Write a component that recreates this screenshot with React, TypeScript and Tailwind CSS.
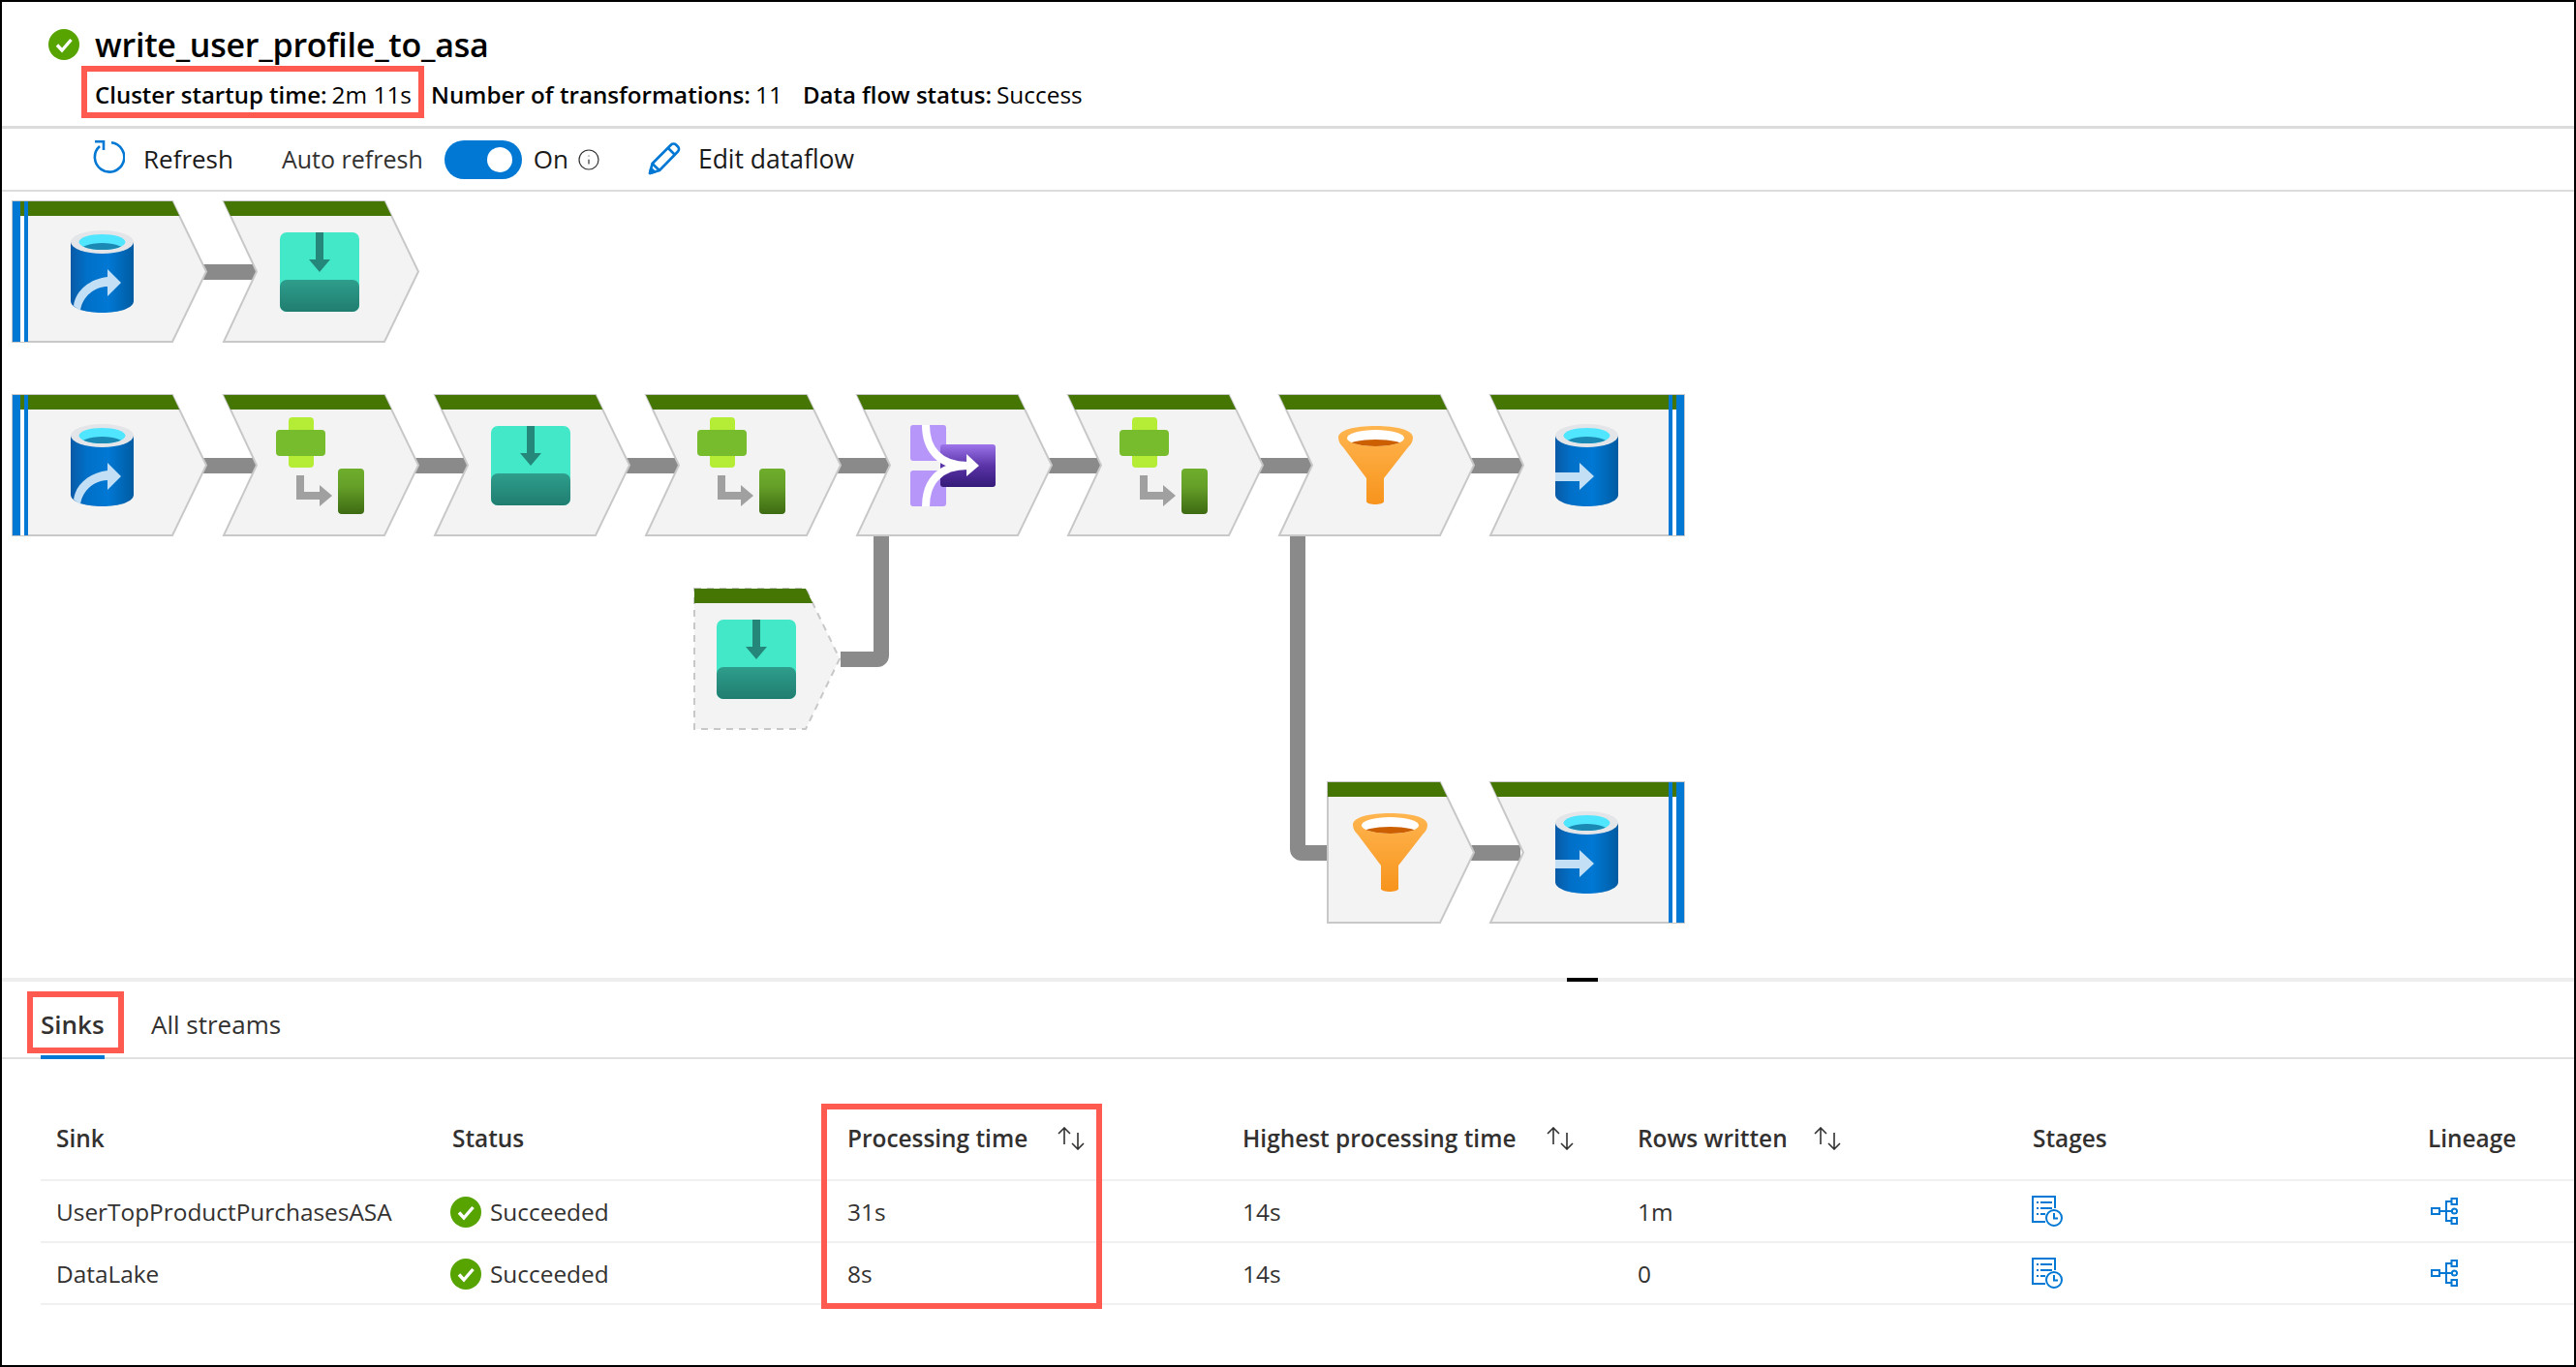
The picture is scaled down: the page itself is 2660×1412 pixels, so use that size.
import React from "react";
import { Info } from "lucide-react";

const FONT = "font-['Open_Sans','Noto_Sans',sans-serif]";

function CheckCircle({ className }: { className: string }) {
  return (
    <svg viewBox="0 0 32 32" className={className}>
      <circle cx="16" cy="16" r="16" fill="#57a300" />
      <path d="M9 16.5l5 5.5 9.5-11" fill="none" stroke="#fff" strokeWidth="3.4" />
    </svg>
  );
}

function SortIcon({ className }: { className: string }) {
  return (
    <svg viewBox="0 0 30 24" className={className} fill="none" stroke="#323130" strokeWidth="1.6">
      <path d="M8 18V1M2 7l6-6 6 6" />
      <path d="M22 6v17M16 17l6 6 6-6" />
    </svg>
  );
}

function StagesIcon() {
  return (
    <svg viewBox="0 0 32 32" className="w-8 h-8" fill="none" stroke="#0078d4" strokeWidth="2">
      <path d="M14 27H1V1h23v12" />
      <path d="M5 7h2M9 7h12M5 13h2M9 13h12M5 19h2M9 19h5" />
      <circle cx="23" cy="23" r="8" />
      <path d="M23 18v5.5h4" />
    </svg>
  );
}

function LineageIcon() {
  return (
    <svg viewBox="0 0 28 28" className="w-7 h-7 ml-[3px]" fill="none" stroke="#0078d4" strokeWidth="2">
      <rect x="1" y="11" width="8" height="6" />
      <rect x="21.5" y="1" width="5.5" height="6" />
      <circle cx="24.5" cy="14" r="2.6" />
      <rect x="21.5" y="21" width="5.5" height="6" />
      <path d="M9 14h13M16 14V4h5.5M16 14v10h5.5" />
    </svg>
  );
}

function RedBox({ className }: { className: string }) {
  return <div className={`absolute border-[6px] border-[#ff5a50] pointer-events-none ${className}`} />;
}

const NODE_H = 145;
const BAR_H = 15;

function Node({
  x,
  y,
  left,
  right,
  w,
  dashed,
  source,
  sink,
}: {
  x: number;
  y: number;
  left: "notch" | "flat";
  right: "point" | "flat";
  w: number;
  dashed?: boolean;
  source?: boolean;
  sink?: boolean;
}) {
  const topRight = right === "point" ? w - 35 : w;
  const d =
    `M0 0 L${topRight} 0 ` +
    (right === "point" ? `L${w} ${NODE_H / 2} L${topRight} ${NODE_H} ` : `L${w} ${NODE_H} `) +
    `L0 ${NODE_H} ` +
    (left === "notch" ? `L34 ${NODE_H / 2} ` : "") +
    "Z";
  const slope = 35 / (NODE_H / 2);
  const barRight = right === "point" ? topRight + BAR_H * slope : w;
  const barLeft = left === "notch" ? BAR_H * (34 / (NODE_H / 2)) : 0;
  return (
    <g transform={`translate(${x} ${y})`}>
      <path d={d} fill="#f3f3f3" stroke="#c8c8c8" strokeWidth="2" strokeDasharray={dashed ? "7 6" : undefined} />
      <path d={`M0 0 L${topRight} 0 L${barRight} ${BAR_H} L${barLeft} ${BAR_H} Z`} fill="#457503" />
      {source && (
        <>
          <rect x="0" y="0" width="8" height={NODE_H} fill="#0078d4" />
          <rect x="8" y={BAR_H} width="4" height={NODE_H - BAR_H} fill="#fff" />
          <rect x="12" y="0" width="4" height={NODE_H} fill="#0078d4" />
        </>
      )}
      {sink && (
        <>
          <rect x={w - 16} y="0" width="4" height={NODE_H} fill="#0078d4" />
          <rect x={w - 12} y={BAR_H} width="4" height={NODE_H - BAR_H} fill="#fff" />
          <rect x={w - 8} y="0" width="8" height={NODE_H} fill="#0078d4" />
        </>
      )}
    </g>
  );
}

function Defs() {
  return (
    <defs>
      <linearGradient id="dbBody" x1="0" x2="1" y1="0" y2="0">
        <stop offset="0" stopColor="#0a5aa6" />
        <stop offset="0.25" stopColor="#0070c8" />
        <stop offset="0.6" stopColor="#0078d4" />
        <stop offset="1" stopColor="#005ba1" />
      </linearGradient>
      <linearGradient id="tealBottom" x1="0" x2="0" y1="0" y2="1">
        <stop offset="0" stopColor="#2f9e8c" />
        <stop offset="1" stopColor="#207d70" />
      </linearGradient>
      <linearGradient id="greenRect" x1="0" x2="0" y1="0" y2="1">
        <stop offset="0" stopColor="#6fae2c" />
        <stop offset="0.4" stopColor="#659f28" />
        <stop offset="1" stopColor="#3d6a12" />
      </linearGradient>
      <linearGradient id="purpleRect" x1="0" x2="0" y1="0" y2="1">
        <stop offset="0" stopColor="#9d74ea" />
        <stop offset="0.5" stopColor="#5b34a8" />
        <stop offset="1" stopColor="#341a78" />
      </linearGradient>
      <linearGradient id="funnelFill" x1="0" x2="0" y1="0" y2="1">
        <stop offset="0" stopColor="#ffb54f" />
        <stop offset="1" stopColor="#f7941d" />
      </linearGradient>
      <clipPath id="dbInner">
        <ellipse cx="32.5" cy="12" rx="24" ry="8" />
      </clipPath>
      <clipPath id="funnelInner">
        <ellipse cx="38.5" cy="12.5" rx="29.5" ry="8.5" />
      </clipPath>
      <g id="dbBase">
        <path d="M0 12V73C0 80 14 85 32.5 85S65 80 65 73V12Z" fill="url(#dbBody)" />
        <ellipse cx="32.5" cy="12" rx="32.5" ry="12" fill="#e3e5e8" />
        <ellipse cx="32.5" cy="12" rx="24" ry="8" fill="#50e6ff" />
        <ellipse cx="32.5" cy="22" rx="24" ry="9" fill="#1a8ab5" clipPath="url(#dbInner)" />
      </g>
      <g id="dbSource">
        <use href="#dbBase" />
        <path d="M3 78C5 62 20 50 38 48V40L52 54 38 68V58C25 58 12 68 10 83Z" fill="#c3dff5" />
      </g>
      <g id="dbSink">
        <use href="#dbBase" />
        <path d="M0 50H25V40L40 54 25 68V59H0Z" fill="#c3dff5" />
      </g>
      <g id="teal">
        <rect x="0" y="0" width="82" height="82" rx="7" fill="#43e8c9" />
        <path d="M37 0h8v28h7L41 41 30 28h7Z" fill="#25877a" />
        <path d="M0 56a7 7 0 0 1 7-7h68a7 7 0 0 1 7 7v19a7 7 0 0 1-7 7H7a7 7 0 0 1-7-7Z" fill="url(#tealBottom)" />
      </g>
      <g id="derive">
        <rect x="67" y="23" width="26" height="52" rx="4" fill="#b4ec36" />
        <rect x="54" y="36" width="51" height="27" rx="4" fill="#76bc2d" />
        <path d="M75 83h8v17h16v-7l13 11-13 11v-7H75Z" fill="#a0a0a0" />
        <rect x="118" y="76" width="27" height="47" rx="4" fill="url(#greenRect)" />
      </g>
      <g id="join">
        <rect x="55" y="31" width="37" height="37" rx="3" fill="#b796f9" />
        <rect x="55" y="78" width="37" height="37" rx="3" fill="#b796f9" />
        <rect x="86" y="51" width="57" height="44" rx="3" fill="url(#purpleRect)" />
        <path d="M71 31C71 56 85 73 114 73M71 115C71 90 85 73 114 73" fill="none" stroke="#fff" strokeWidth="8" />
        <path d="M113 61L126 73 113 84Z" fill="#fff" />
      </g>
      <g id="funnel">
        <path d="M0 12C0 4 17 0 38.5 0S77 4 77 12C77 16 75 19 72 22L47 54V78C47 80 42 81 38 81S29 80 29 78V54L5 22C2 19 0 16 0 12Z" fill="url(#funnelFill)" />
        <ellipse cx="38.5" cy="12.5" rx="29.5" ry="8.5" fill="#fff" />
        <ellipse cx="38.5" cy="21" rx="29.5" ry="7" fill="#cc5f00" clipPath="url(#funnelInner)" />
      </g>
    </defs>
  );
}

function Diagram() {
  const row2Mid = [231, 449, 667, 885, 1103, 1321];
  return (
    <svg viewBox="2 198 2656 812" className="block w-full h-[812px]">
      <Defs />
      <g fill="#8a8a8a">
        <rect x="205" y="273" width="60" height="16" />
        <rect x="205" y="473" width="1370" height="16" />
        <path d="M868 673H902V553H918V677A12 12 0 0 1 906 689H868Z" />
        <path d="M1332 553H1348V873H1372V889H1344A12 12 0 0 1 1332 877Z" />
        <rect x="1510" y="873" width="60" height="16" />
      </g>
      <Node x={13} y={208} left="flat" right="point" w={200} source />
      <Node x={231} y={208} left="notch" right="point" w={201} />
      <use href="#dbSource" x="73" y="238" />
      <use href="#teal" x="289" y="240" />
      <Node x={13} y={408} left="flat" right="point" w={200} source />
      {row2Mid.map((x) => (
        <Node key={x} x={x} y={408} left="notch" right="point" w={201} />
      ))}
      <Node x={1539} y={408} left="notch" right="flat" w={200} sink />
      <use href="#dbSource" x="73" y="438" />
      <use href="#derive" x="231" y="408" />
      <use href="#teal" x="507" y="440" />
      <use href="#derive" x="667" y="408" transform="translate(-1 0)" />
      <use href="#join" x="885" y="408" />
      <use href="#derive" x="1103" y="408" transform="translate(-1 0)" />
      <use href="#funnel" x="1382" y="440" />
      <use href="#dbSink" x="1606" y="438" />
      <Node x={717} y={608} left="flat" right="point" w={150} dashed />
      <use href="#teal" x="740" y="640" />
      <Node x={1371} y={808} left="flat" right="point" w={151} />
      <Node x={1539} y={808} left="notch" right="flat" w={200} sink />
      <use href="#funnel" x="1397" y="840" />
      <use href="#dbSink" x="1606" y="838" />
    </svg>
  );
}

const COLS = "grid grid-cols-[409px_408px_408px_408px_408px_408px_1fr]";

function HeaderCell({ label, sortClass }: { label: string; sortClass?: string }) {
  return (
    <div className="flex items-center pl-4 font-semibold text-[24.4px] text-[#323130] whitespace-nowrap">
      <span>{label}</span>
      {sortClass && <SortIcon className={`w-[30px] h-6 ${sortClass}`} />}
    </div>
  );
}

function Row({ name, proc, high, rows }: { name: string; proc: string; high: string; rows: string }) {
  return (
    <div className={`${COLS} h-16 border-b-2 border-[#f0f0f0] items-center text-[24.4px] text-[#323130]`}>
      <div className="pl-4 pt-[2px]">{name}</div>
      <div className="pl-[14px] pt-[2px] flex items-center gap-[9px]">
        <CheckCircle className="w-8 h-8" />
        <span>Succeeded</span>
      </div>
      <div className="pl-4 pt-[2px]">{proc}</div>
      <div className="pl-4 pt-[2px]">{high}</div>
      <div className="pl-4 pt-[2px]">{rows}</div>
      <div className="pl-[15px]">
        <StagesIcon />
      </div>
      <div className="pl-4">
        <LineageIcon />
      </div>
    </div>
  );
}

export default function App() {
  return (
    <div className={`${FONT} relative w-[2660px] h-[1412px] box-border border-2 border-black bg-white text-black overflow-hidden flex flex-col`}>
      <header className="h-[128px] border-b-[3px] border-[#dcdcdc] box-content shrink-0">
        <div className="flex items-center h-[32px] mt-[28px] pl-[48px] gap-4">
          <CheckCircle className="w-8 h-8" />
          <h1 className="text-[34px] font-semibold tracking-[-0.25px] leading-none">write_user_profile_to_asa</h1>
        </div>
        <div className="relative flex items-center h-[36px] mt-[18px] pl-[96px] text-[24.4px] whitespace-nowrap">
          <span className="font-semibold text-[24px]">Cluster startup time:</span>
          <span className="ml-[5px]">2m 11s</span>
          <span className="font-semibold text-[24.2px] ml-5">Number of transformations:</span>
          <span className="ml-[5px]">11</span>
          <span className="font-semibold text-[24px] ml-[21px]">Data flow status:</span>
          <span className="ml-[5px]">Success</span>
        </div>
      </header>
      <RedBox className="left-[82px] top-[66px] w-[354px] h-[54px]" />

      <div className="h-[63px] border-b-2 border-[#dcdcdc] box-content shrink-0 flex items-center pl-[93px] text-[26px] text-[#1a1a1a] whitespace-nowrap">
        <svg viewBox="0 0 34 36" className="w-[34px] h-9 -mt-[3px]" fill="none" stroke="#0078d4" strokeWidth="2.6">
          <path d="M8 6A15.2 15.2 0 1 0 20 2.3" />
          <path d="M3 1.2H12V10" />
        </svg>
        <span className="ml-[19px]">Refresh</span>
        <span className="ml-[50px] font-medium text-[25px] text-[#323130]">Auto refresh</span>
        <div className="ml-[22px] w-20 h-10 rounded-full bg-[#0078d4] flex items-center pl-[44px]">
          <div className="w-[26px] h-[26px] rounded-full bg-white" />
        </div>
        <span className="ml-3">On</span>
        <Info size={24} strokeWidth={1.2} className="ml-[9px] text-[#323130]" />
        <svg viewBox="0 0 34 34" className="ml-[49px] w-[34px] h-[34px] -mt-[2px]" fill="none" stroke="#0078d4" strokeWidth="2.6" strokeLinejoin="round">
          <path d="M2 32l2.5-10L24 2.5a3.5 3.5 0 0 1 5 0l2 2a3.5 3.5 0 0 1 0 5L12 29Z" />
          <path d="M4.5 22L12 29M21 6l7 7" />
          <path d="M2 32l1.2-5 3.8 3.6Z" fill="#0078d4" />
        </svg>
        <span className="ml-[18px] text-[26.5px]">Edit dataflow</span>
      </div>

      <div className="h-[812px] shrink-0">
        <Diagram />
      </div>

      <div className="h-1 bg-[#eeeeee] shrink-0 pl-[1616px]">
        <div className="w-8 h-1 bg-black" />
      </div>

      <nav className="relative h-[80px] shrink-0 border-b-2 border-[#e0e0e0] flex items-end pl-[40px] text-[26px] text-[#323130]">
        <div className="relative font-semibold h-[78px] w-[66px] flex items-center pt-[11px] whitespace-nowrap">
          Sinks
          <div className="absolute left-0 right-0 bottom-[-2px] h-1 bg-[#0078d4]" />
        </div>
        <div className="ml-12 h-[78px] flex items-center pt-[10px] whitespace-nowrap">All streams</div>
      </nav>
      <RedBox className="left-[26px] top-[1022px] w-[100px] h-[64px]" />

      <section className="ml-[40px] mt-[50px]">
        <div className={`${COLS} h-[76px] border-b-2 border-[#f0f0f0] pb-[10px]`}>
          <HeaderCell label="Sink" />
          <HeaderCell label="Status" />
          <HeaderCell label="Processing time" sortClass="ml-[30px]" />
          <HeaderCell label="Highest processing time" sortClass="ml-[31px]" />
          <HeaderCell label="Rows written" sortClass="ml-[26px]" />
          <HeaderCell label="Stages" />
          <HeaderCell label="Lineage" />
        </div>
        <Row name="UserTopProductPurchasesASA" proc="31s" high="14s" rows="1m" />
        <Row name="DataLake" proc="8s" high="14s" rows="0" />
      </section>
      <RedBox className="left-[846px] top-[1138px] w-[290px] h-[212px]" />
    </div>
  );
}
